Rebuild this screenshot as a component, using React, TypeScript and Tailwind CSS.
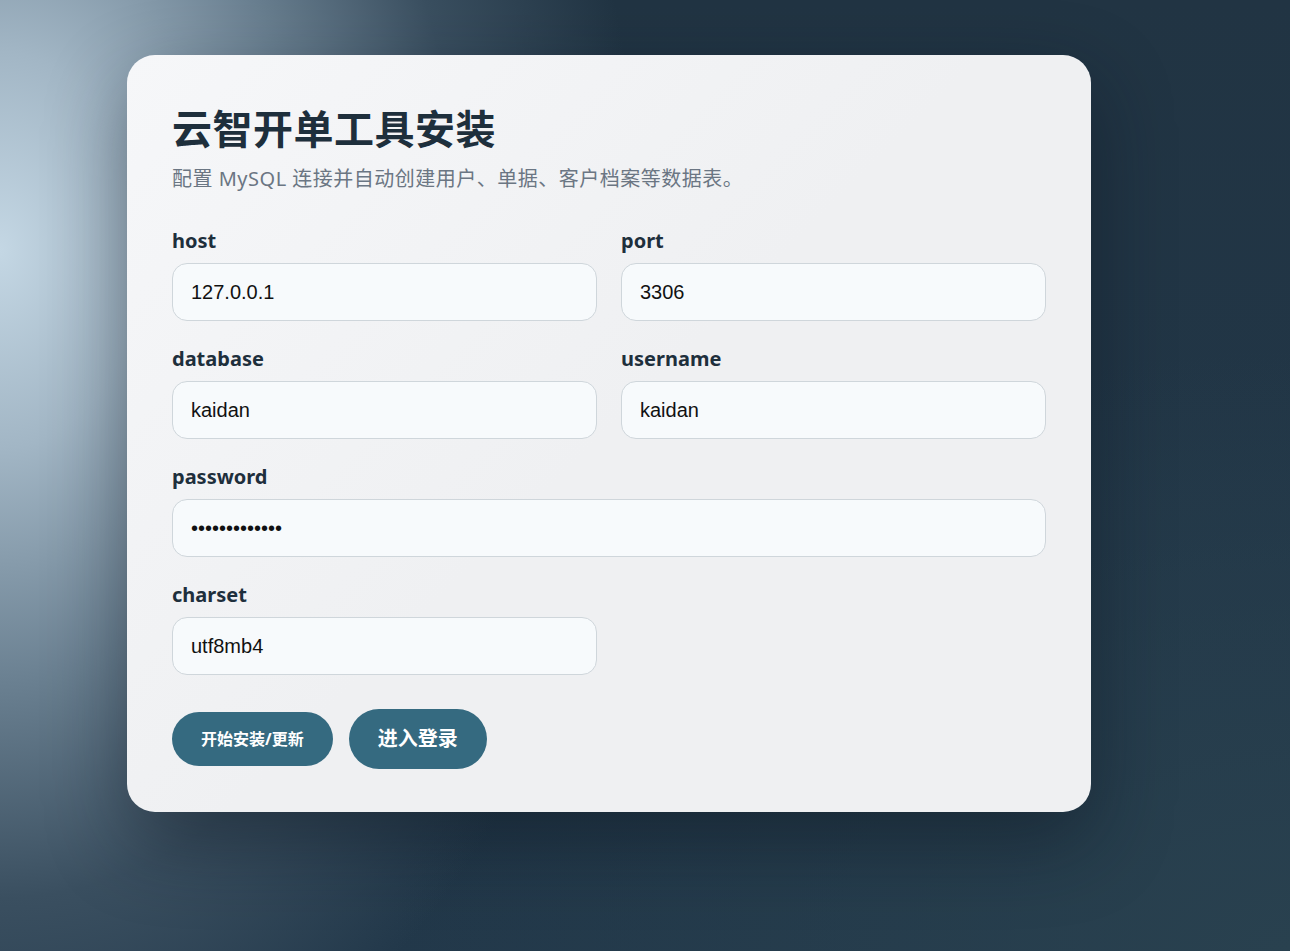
import { useState } from 'react';

type Field = {
  key: string;
  label: string;
  type?: string;
  span?: boolean;
};

const fields: Field[] = [
  { key: 'host', label: 'host' },
  { key: 'port', label: 'port' },
  { key: 'database', label: 'database' },
  { key: 'username', label: 'username' },
  { key: 'password', label: 'password', type: 'password', span: true },
  { key: 'charset', label: 'charset' },
];

export default function App() {
  const [values, setValues] = useState<Record<string, string>>({
    host: '127.0.0.1',
    port: '3306',
    database: 'kaidan',
    username: 'kaidan',
    password: 'kaidan_secret',
    charset: 'utf8mb4',
  });

  return (
    <div
      className="min-h-screen w-full bg-[#213443] bg-[radial-gradient(ellipse_640px_900px_at_0px_250px,#c4d7e4_0%,#a2b6c5_22%,#6a8091_48%,#3a4f60_72%,rgba(33,52,67,0)_100%),radial-gradient(ellipse_900px_600px_at_1290px_951px,#29414f_0%,rgba(33,52,67,0)_100%),linear-gradient(180deg,#213443_0%,#22384a_100%)] pl-[127px] pt-[55px] pb-[140px]"
      style={{ fontFamily: '"Noto Sans", "Noto Sans CJK SC", sans-serif' }}
    >
      <div className="w-[964px] rounded-[28px] bg-[linear-gradient(135deg,#f6f7f9_0%,#eff0f2_50%,#eff0f2_100%)] shadow-[0_30px_80px_rgba(10,20,30,0.45)] px-[45px] pt-[50px] pb-[43px]">
        <h1 className="text-[40px] leading-[48px] font-bold text-[#1e2f3c] tracking-[0.5px]">
          云智开单工具安装
        </h1>
        <p className="mt-3 text-[20px] leading-[28px] text-[#6b7683] tracking-[0.5px]">
          配置 MySQL 连接并自动创建用户、单据、客户档案等数据表。
        </p>

        <div className="mt-[34px] grid grid-cols-2 gap-x-6 gap-y-6">
          {fields.map((f) => (
            <div key={f.key} className={f.span ? 'col-span-2' : ''}>
              <label className="block text-[20px] leading-[28px] font-bold text-[#1e2f3c] mb-2">
                {f.label}
              </label>
              <input
                type={f.type ?? 'text'}
                value={values[f.key]}
                onChange={(e) => setValues((prev) => ({ ...prev, [f.key]: e.target.value }))}
                className="block w-full h-[58px] rounded-[15px] border border-[#cfd6db] bg-[#f7fafc] px-[18px] text-[20px] text-[#111] outline-none"
                style={{ fontFamily: '"Liberation Sans", Arial, sans-serif' }}
              />
            </div>
          ))}
        </div>

        <div className="mt-[34px] flex items-center gap-4">
          <button className="h-[54px] px-[29px] rounded-full bg-[#356a80] text-white text-[16px] font-bold">
            开始安装/更新
          </button>
          <button className="h-[60px] px-[29px] rounded-full bg-[#356a80] text-white text-[20px] font-bold">
            进入登录
          </button>
        </div>
      </div>
    </div>
  );
}
